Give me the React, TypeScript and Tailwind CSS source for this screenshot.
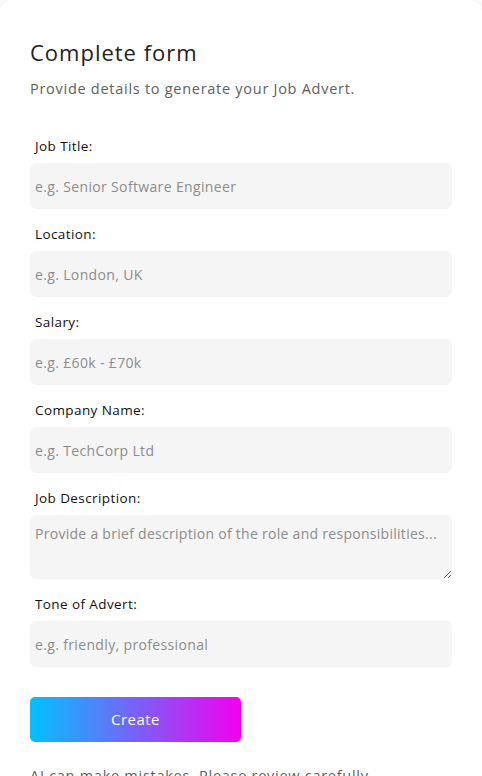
import React from 'react';

const fields = [
  { label: 'Job Title:', placeholder: 'e.g. Senior Software Engineer' },
  { label: 'Location:', placeholder: 'e.g. London, UK' },
  { label: 'Salary:', placeholder: 'e.g. £60k - £70k' },
  { label: 'Company Name:', placeholder: 'e.g. TechCorp Ltd' },
];

const body = { fontFamily: '"Open Sans", "DejaVu Sans", sans-serif' };

export default function App() {
  return (
    <div className="min-h-screen bg-[#fafafa]" style={body}>
      <div className="bg-white rounded-xl shadow-[0_0_4px_rgba(0,0,0,0.04)] px-[30px] pt-[38px] pb-10">
        <h1 className="text-[22px] leading-7 tracking-[0.045em] text-[#222]">Complete form</h1>
        <p className="mt-[13px] text-[14.5px] leading-5 tracking-[0.05em] text-[#606060]">Provide details to generate your Job Advert.</p>

        <form className="mt-[39px] flex flex-col" onSubmit={(e) => e.preventDefault()}>
          {fields.map((f) => (
            <div key={f.label} className="flex flex-col mb-[17px]">
              <label className="pl-[5px] text-[13.5px] leading-4 tracking-[0.03em] text-[#111]">{f.label}</label>
              <input
                className="mt-[9px] h-[46px] w-full rounded-md bg-[#f5f5f5] px-[5px] text-[14px] tracking-[0.025em] text-[#333] placeholder-[#8c8c8c] outline-none"
                placeholder={f.placeholder}
              />
            </div>
          ))}

          <div className="flex flex-col mb-[17px]">
            <label className="pl-[5px] text-[13.5px] leading-4 tracking-[0.03em] text-[#111]">Job Description:</label>
            <textarea
              className="mt-[9px] h-[64px] w-full rounded-md bg-[#f5f5f5] px-[5px] py-[9px] text-[14px] leading-5 tracking-[0.02em] text-[#333] placeholder-[#8c8c8c] outline-none"
              placeholder="Provide a brief description of the role and responsibilities..."
            />
          </div>

          <div className="flex flex-col">
            <label className="pl-[5px] text-[13.5px] leading-4 tracking-[0.03em] text-[#111]">Tone of Advert:</label>
            <input
              className="mt-[9px] h-[46px] w-full rounded-md bg-[#f5f5f5] px-[5px] text-[14px] tracking-[0.025em] text-[#333] placeholder-[#8c8c8c] outline-none"
              placeholder="e.g. friendly, professional"
            />
          </div>

          <button
            type="submit"
            className="mt-[30px] h-[45px] w-[211px] rounded-[5px] bg-[linear-gradient(to_right,#00c2ff,#f200f0)] text-[15px] tracking-[0.03em] text-white"
          >
            Create
          </button>
        </form>

        <p className="mt-[24px] text-[14.5px] leading-5 tracking-[0.05em] text-[#606060]">AI can make mistakes. Please review carefully.</p>
      </div>
    </div>
  );
}
